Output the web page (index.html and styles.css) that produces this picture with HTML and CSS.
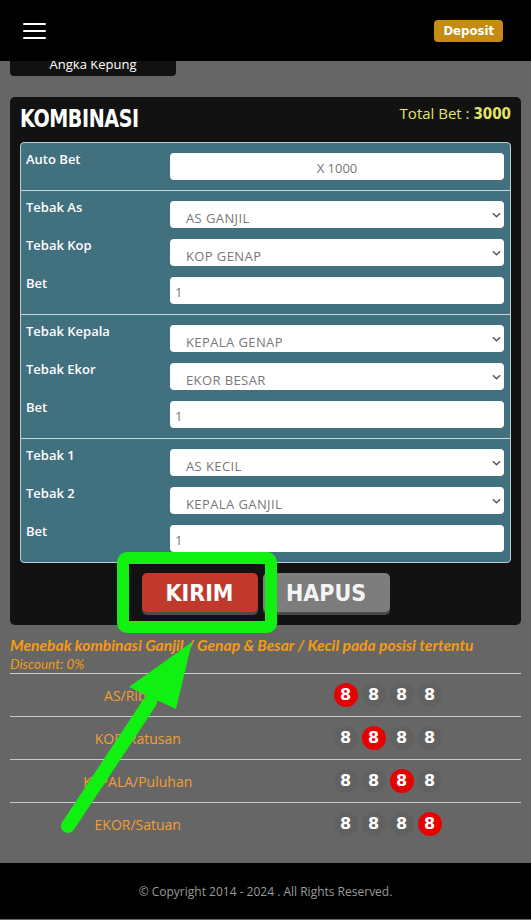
FILE: index.html
```html
<!DOCTYPE html>
<html lang="id">
<head>
    <meta charset="UTF-8">
    <meta name="viewport" content="width=device-width, initial-scale=1.0">
    <title>Kombinasi</title>
    <link rel="stylesheet" href="styles.css">
</head>
<body>

    <div class="topbar">
        <div class="burger"><span></span><span></span><span></span></div>
        <a class="deposit" href="#">Deposit</a>
    </div>

    <div class="page">
        <div class="tab">Angka Kepung</div>

        <div class="panel">
            <div class="panel-head">
                <h1>KOMBINASI</h1>
                <div class="total">Total Bet : <b>3000</b></div>
            </div>

            <div class="bet-table">
                <div class="group auto">
                    <div class="row">
                        <label>Auto Bet</label>
                        <input class="field center" type="text" value="X 1000">
                    </div>
                </div>

                <div class="group">
                    <div class="row">
                        <label>Tebak As</label>
                        <div class="pick">
                            <select><option>AS GANJIL</option></select>
                            <svg viewBox="0 0 10 6"><path d="M1 1l4 4 4-4"/></svg>
                        </div>
                    </div>
                    <div class="row">
                        <label>Tebak Kop</label>
                        <div class="pick">
                            <select><option>KOP GENAP</option></select>
                            <svg viewBox="0 0 10 6"><path d="M1 1l4 4 4-4"/></svg>
                        </div>
                    </div>
                    <div class="row">
                        <label>Bet</label>
                        <input class="field" type="text" value="1">
                    </div>
                </div>

                <div class="group">
                    <div class="row">
                        <label>Tebak Kepala</label>
                        <div class="pick">
                            <select><option>KEPALA GENAP</option></select>
                            <svg viewBox="0 0 10 6"><path d="M1 1l4 4 4-4"/></svg>
                        </div>
                    </div>
                    <div class="row">
                        <label>Tebak Ekor</label>
                        <div class="pick">
                            <select><option>EKOR BESAR</option></select>
                            <svg viewBox="0 0 10 6"><path d="M1 1l4 4 4-4"/></svg>
                        </div>
                    </div>
                    <div class="row">
                        <label>Bet</label>
                        <input class="field" type="text" value="1">
                    </div>
                </div>

                <div class="group">
                    <div class="row">
                        <label>Tebak 1</label>
                        <div class="pick">
                            <select><option>AS KECIL</option></select>
                            <svg viewBox="0 0 10 6"><path d="M1 1l4 4 4-4"/></svg>
                        </div>
                    </div>
                    <div class="row">
                        <label>Tebak 2</label>
                        <div class="pick">
                            <select><option>KEPALA GANJIL</option></select>
                            <svg viewBox="0 0 10 6"><path d="M1 1l4 4 4-4"/></svg>
                        </div>
                    </div>
                    <div class="row">
                        <label>Bet</label>
                        <input class="field" type="text" value="1">
                    </div>
                </div>
            </div>

            <div class="actions">
                <button class="btn btn-send">KIRIM</button>
                <button class="btn btn-clear">HAPUS</button>
            </div>
        </div>

        <p class="info">Menebak kombinasi Ganjil / Genap &amp; Besar / Kecil pada posisi tertentu</p>
        <p class="discount">Discount: 0%</p>

        <table class="positions">
            <tr>
                <td>AS/Ribuan</td>
                <td><span class="dot on">8</span><span class="dot">8</span><span class="dot">8</span><span class="dot">8</span></td>
            </tr>
            <tr>
                <td>KOP/Ratusan</td>
                <td><span class="dot">8</span><span class="dot on">8</span><span class="dot">8</span><span class="dot">8</span></td>
            </tr>
            <tr>
                <td>KEPALA/Puluhan</td>
                <td><span class="dot">8</span><span class="dot">8</span><span class="dot on">8</span><span class="dot">8</span></td>
            </tr>
            <tr>
                <td>EKOR/Satuan</td>
                <td><span class="dot">8</span><span class="dot">8</span><span class="dot">8</span><span class="dot on">8</span></td>
            </tr>
        </table>
    </div>

    <div class="footer">&copy; Copyright 2014 - 2024 . All Rights Reserved.</div>

    <!-- highlight marks drawn over the page -->
    <svg class="marks" viewBox="0 0 531 920" width="531" height="920">
        <rect x="123" y="558" width="148" height="69" rx="4" fill="none" stroke="#11f111" stroke-width="12"/>
        <line x1="68" y1="826" x2="150" y2="702" stroke="#11f111" stroke-width="14" stroke-linecap="round"/>
        <polygon points="192,642 129,687 176,709" fill="#11f111"/>
    </svg>

</body>
</html>
```

FILE: styles.css
```css
body{
    margin: 0;
    padding: 0;
    background: #666;
    font-family: "Open Sans", sans-serif;
    position: relative;
}

.topbar{
    height: 61px;
    background: #000;
    display: flex;
    align-items: center;
    justify-content: space-between;
    padding: 0 28px 0 23px;
}
.burger{
    width: 23px;
    display: flex;
    flex-direction: column;
    gap: 5px;
    margin-top: 1px;
}
.burger span{
    height: 2px;
    background: #fff;
    border-radius: 1px;
}
.deposit{
    background: #c58b12;
    color: #fff;
    text-decoration: none;
    font-family: "DejaVu Sans Condensed", sans-serif;
    font-weight: bold;
    font-size: 13px;
    padding: 3px 9px 4px;
    border-radius: 4px;
}

.page{
    padding: 0 10px;
}
.tab{
    width: 166px;
    height: 15px;
    background: #111;
    border-radius: 0 0 4px 4px;
    color: #fff;
    font-size: 13px;
    line-height: 6px;
    text-align: center;
    overflow: hidden;
}

.panel{
    margin-top: 21px;
    background: #121212;
    border-radius: 5px;
    padding: 6px 10px 13px;
}
.panel-head{
    display: flex;
    justify-content: space-between;
    align-items: flex-start;
    height: 39px;
}
.panel-head h1{
    margin: 0;
    color: #fff;
    font-family: "DejaVu Sans Condensed", sans-serif;
    font-size: 25px;
    line-height: 32px;
    letter-spacing: -0.5px;
    transform: scaleX(0.85);
    transform-origin: left center;
}
.total{
    color: #e4e46a;
    font-size: 15px;
    line-height: 18px;
    margin-top: 1px;
}
.total b{
    font-family: "DejaVu Sans Condensed", sans-serif;
}

.bet-table{
    background: #41707f;
    border: 1px solid #b9cdd6;
    border-radius: 4px;
}
.group{
    padding: 10px 5px 10px 5px;
    display: flex;
    flex-direction: column;
    gap: 11px;
}
.group + .group{
    border-top: 1px solid #c4d4dc;
}
.row{
    display: flex;
    align-items: flex-start;
}
.row label{
    width: 144px;
    color: #fff;
    font-size: 13px;
    font-weight: 600;
    line-height: 12px;
}
.field,
.pick select{
    width: 334px;
    height: 27px;
    box-sizing: border-box;
    border: 0;
    border-radius: 4px;
    background: #fff;
    color: #777;
    font-family: "Open Sans", sans-serif;
    font-size: 13px;
    padding: 2px 0 0 5px;
    outline: 0;
}
.field.center{
    text-align: center;
    padding-left: 0;
}
.pick{
    position: relative;
}
.pick select{
    appearance: none;
    -webkit-appearance: none;
    padding: 6px 0 0 16px;
    letter-spacing: 0.4px;
}
.pick svg{
    position: absolute;
    right: 3px;
    top: 11px;
    width: 9px;
    height: 6px;
    fill: none;
    stroke: #555;
    stroke-width: 1.6;
}

.actions{
    display: flex;
    justify-content: center;
    gap: 5px;
    margin-top: 10px;
}
.btn{
    border: 0;
    height: 39px;
    border-radius: 5px;
    color: #fff;
    font-family: "DejaVu Sans Condensed", sans-serif;
    font-weight: bold;
    font-size: 23px;
    padding: 0;
    box-shadow: 0 3px 0 #4b4b4b;
    cursor: pointer;
}
.btn-send{
    width: 116px;
    background: #c0392b;
}
.btn-clear{
    width: 127px;
    background: #7d7d7d;
    color: #f4f4f4;
}

.info{
    margin: 11px 0 0;
    color: #f39c12;
    font-family: "Lato", sans-serif;
    font-weight: bold;
    font-style: italic;
    font-size: 15.6px;
    line-height: 19px;
}
.discount{
    margin: 0;
    color: #f39c12;
    font-family: "Lato", sans-serif;
    font-style: italic;
    font-size: 13.5px;
    line-height: 18px;
    padding-bottom: 0;
    border-bottom: 1px solid #ccc;
}

.positions{
    width: 100%;
    border-collapse: collapse;
}
.positions td{
    width: 50%;
    height: 42px;
    text-align: center;
    color: #f0a030;
    font-size: 14px;
    border-bottom: 1px solid #c8c8c8;
    padding: 0;
}
.positions tr:last-child td{
    border-bottom: 0;
}
.positions td:last-child{
    text-align: left;
    padding-left: 68px;
}
.dot{
    display: inline-block;
    width: 24px;
    height: 24px;
    line-height: 24px;
    border-radius: 50%;
    background: #616161;
    color: #fff;
    font-family: "DejaVu Sans", sans-serif;
    font-weight: bold;
    font-size: 16px;
    text-align: center;
    margin-right: 4px;
    vertical-align: middle;
}
.dot.on{
    background: #e60000;
}

.footer{
    margin-top: 18px;
    height: 56px;
    background: #000;
    color: #9a9a9a;
    font-size: 12px;
    display: flex;
    align-items: center;
    justify-content: center;
}

.marks{
    position: absolute;
    left: 0;
    top: 0;
    pointer-events: none;
}
```
